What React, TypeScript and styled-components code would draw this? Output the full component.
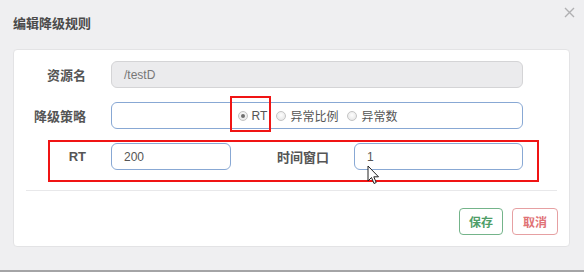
import React from "react";
import styled, { createGlobalStyle } from "styled-components";

const Global = createGlobalStyle`
  html, body { margin: 0; padding: 0; background: #efeff1; }
  body { font-family: "Liberation Sans", "Noto Sans CJK SC", sans-serif; }
  * { box-sizing: border-box; }
`;

const Page = styled.div`
  width: 584px;
  height: 272px;
  background: #efeff1;
  border-bottom: 2px solid #a4a4a6;
  position: relative;
  overflow: hidden;
`;

const Header = styled.div`
  height: 49px;
  position: relative;
  padding: 14px 0 0 13px;
`;

const Title = styled.h4`
  margin: 0;
  font-family: "Noto Sans CJK SC", sans-serif;
  font-size: 13px;
  line-height: 17px;
  font-weight: 700;
  color: #4a4a4a;
`;

const Close = styled.span`
  position: absolute;
  right: 8px;
  top: 5px;
  width: 14px;
  height: 14px;
  display: flex;
  align-items: center;
  justify-content: center;
`;

const Card = styled.div`
  position: relative;
  margin-left: 13px;
  width: 557px;
  height: 198px;
  background: #ffffff;
  border: 1px solid #e3e3e5;
  border-radius: 4px;
  padding-top: 11px;
`;

const Form = styled.div`
  display: flex;
  flex-direction: column;
  gap: 14px;
`;

const Row = styled.div`
  display: flex;
  align-items: center;
  height: 27px;
`;

const Label = styled.label<{ $w: number }>`
  width: ${(p) => p.$w}px;
  flex: none;
  text-align: right;
  padding-right: 25px;
  font-family: "Liberation Sans", "Noto Sans CJK SC", sans-serif;
  font-size: 13px;
  font-weight: 700;
  color: #555;
`;

const Input = styled.div<{ $w: number; $disabled?: boolean }>`
  width: ${(p) => p.$w}px;
  height: 27px;
  flex: none;
  border: 1px solid ${(p) => (p.$disabled ? "#d4d4d6" : "#88a8d4")};
  background: ${(p) => (p.$disabled ? "#ebebed" : "#fff")};
  border-radius: 6px;
  padding: 0 12px;
  display: flex;
  align-items: center;
  font-size: 12px;
  color: ${(p) => (p.$disabled ? "#777" : "#555")};
`;

const RadioGroup = styled.div`
  width: 412px;
  height: 27px;
  flex: none;
  border: 1px solid #88a8d4;
  border-radius: 6px;
  display: flex;
  align-items: center;
  justify-content: center;
  gap: 9px;
  padding-left: 1px;
`;

const RadioItem = styled.span`
  display: inline-flex;
  align-items: center;
  gap: 4px;
  font-family: "Liberation Sans", "Noto Sans CJK SC", sans-serif;
  font-size: 12px;
  color: #555;
`;

const Dot = styled.span<{ $on?: boolean }>`
  width: 10px;
  height: 10px;
  border-radius: 50%;
  border: 1px solid #c4c4c4;
  background: radial-gradient(circle at 50% 40%, #fdfdfd, #e2e2e2);
  display: inline-flex;
  align-items: center;
  justify-content: center;
  &::after {
    content: "";
    display: ${(p) => (p.$on ? "block" : "none")};
    width: 4px;
    height: 4px;
    border-radius: 50%;
    background: #707070;
  }
`;

const Divider = styled.div`
  margin: 20px 12px 0 12px;
  height: 1px;
  background: #e8e8ea;
`;

const Footer = styled.div`
  display: flex;
  justify-content: flex-end;
  gap: 9px;
  padding: 17px 11px 0 0;
`;

const Btn = styled.button<{ $tone: "green" | "red"; $w: number }>`
  width: ${(p) => p.$w}px;
  height: 27px;
  border-radius: 4px;
  background: #fff;
  border: 1px solid ${(p) => (p.$tone === "green" ? "#74b48a" : "#e6a0a2")};
  color: ${(p) => (p.$tone === "green" ? "#4f9e68" : "#e07276")};
  font-family: "Noto Sans CJK SC", sans-serif;
  font-size: 12px;
  font-weight: 700;
  padding: 0;
`;

const Mark = styled.div<{ $l: number; $t: number; $w: number; $h: number }>`
  position: absolute;
  left: ${(p) => p.$l}px;
  top: ${(p) => p.$t}px;
  width: ${(p) => p.$w}px;
  height: ${(p) => p.$h}px;
  border: 2.5px solid #f01414;
  pointer-events: none;
`;

const Cursor = styled.svg`
  position: absolute;
  left: 353px;
  top: 115px;
`;

export default function App() {
  return (
    <>
      <Global />
      <Page>
        <Header>
          <Title>编辑降级规则</Title>
          <Close>
            <svg width="11" height="11" viewBox="0 0 11 11">
              <path d="M1 1L10 10M10 1L1 10" stroke="#b0b0b2" strokeWidth="1.4" />
            </svg>
          </Close>
        </Header>
        <Card>
          <Form>
            <Row>
              <Label $w={97}>资源名</Label>
              <Input $w={412} $disabled>/testD</Input>
            </Row>
            <Row>
              <Label $w={97}>降级策略</Label>
              <RadioGroup>
                <RadioItem><Dot $on />RT</RadioItem>
                <RadioItem><Dot />异常比例</RadioItem>
                <RadioItem><Dot />异常数</RadioItem>
              </RadioGroup>
            </Row>
            <Row>
              <Label $w={97}>RT</Label>
              <Input $w={120}>200</Input>
              <Label $w={123}>时间窗口</Label>
              <Input $w={169}>1</Input>
            </Row>
          </Form>
          <Divider />
          <Footer>
            <Btn $tone="green" $w={44}>保存</Btn>
            <Btn $tone="red" $w={46}>取消</Btn>
          </Footer>
          <Mark $l={216} $t={46} $w={41} $h={36} />
          <Mark $l={34} $t={90} $w={491} $h={42} />
          <Cursor width="13" height="20" viewBox="0 0 13 20">
            <path d="M1 1L1 16L4.5 12.5L7 18.5L9.2 17.5L6.8 11.8L11.5 11.8Z" fill="#fff" stroke="#222" strokeWidth="1" strokeLinejoin="round" />
          </Cursor>
        </Card>
      </Page>
    </>
  );
}
